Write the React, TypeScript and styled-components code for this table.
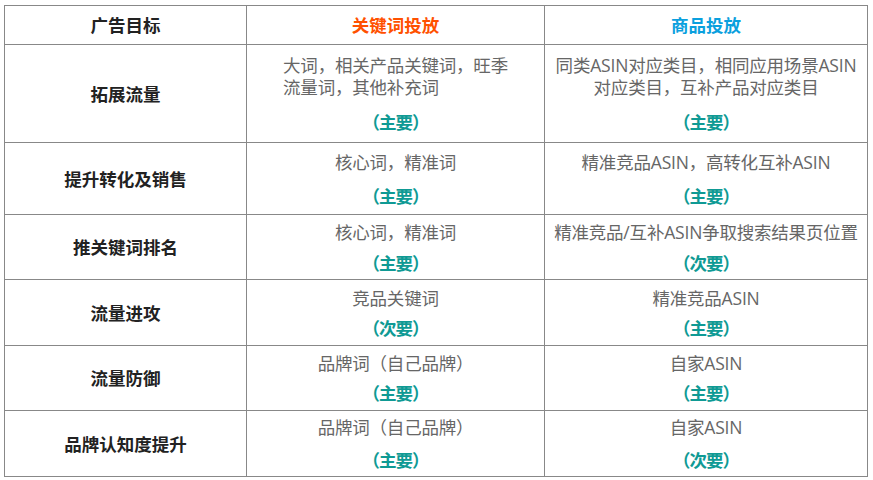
import React from 'react';
import styled, { createGlobalStyle } from 'styled-components';

const GlobalStyle = createGlobalStyle`
	html, body {
		margin: 0;
		padding: 0;
		background: #fff;
	}
	body {
		font-family: "Open Sans", "Noto Sans CJK SC", sans-serif;
	}
`

type Tag = '主要' | '次要'

type Row = {
	goal: string
	height: number
	gap: number
	keyword: string[]
	keywordTag: Tag
	keywordLeft?: boolean
	product: string[]
	productTag: Tag
}

const rows: Row[] = [
	{
		goal: '拓展流量',
		height: 98,
		gap: 13,
		keyword: ['大词，相关产品关键词，旺季', '流量词，其他补充词'],
		keywordTag: '主要',
		keywordLeft: true,
		product: ['同类ASIN对应类目，相同应用场景ASIN', '对应类目，互补产品对应类目'],
		productTag: '主要',
	},
	{
		goal: '提升转化及销售',
		height: 72,
		gap: 12,
		keyword: ['核心词，精准词'],
		keywordTag: '主要',
		product: ['精准竞品ASIN，高转化互补ASIN'],
		productTag: '主要',
	},
	{
		goal: '推关键词排名',
		height: 65,
		gap: 9,
		keyword: ['核心词，精准词'],
		keywordTag: '主要',
		product: ['精准竞品/互补ASIN争取搜索结果页位置'],
		productTag: '次要',
	},
	{
		goal: '流量进攻',
		height: 66,
		gap: 8,
		keyword: ['竞品关键词'],
		keywordTag: '次要',
		product: ['精准竞品ASIN'],
		productTag: '主要',
	},
	{
		goal: '流量防御',
		height: 65,
		gap: 8,
		keyword: ['品牌词（自己品牌）'],
		keywordTag: '主要',
		product: ['自家ASIN'],
		productTag: '主要',
	},
	{
		goal: '品牌认知度提升',
		height: 66,
		gap: 11,
		keyword: ['品牌词（自己品牌）'],
		keywordTag: '主要',
		product: ['自家ASIN'],
		productTag: '次要',
	},
]

const Lines = ({ lines }: { lines: string[] }) => (
	<>
		{lines.map((l, i) => (
			<React.Fragment key={i}>
				{i > 0 && <br />}
				{l}
			</React.Fragment>
		))}
	</>
)

export default function App() {
	return (
		<>
			<GlobalStyle />
			<Page>
				<Table>
					<colgroup>
						<col style={{ width: 242 }} />
						<col style={{ width: 298 }} />
						<col style={{ width: 323 }} />
					</colgroup>
					<thead>
						<TRow $height={39}>
							<HeadCell>广告目标</HeadCell>
							<HeadCell $color="#ff5100">关键词投放</HeadCell>
							<HeadCell $color="#0aa0de">商品投放</HeadCell>
						</TRow>
					</thead>
					<tbody>
						{rows.map((r) => (
							<TRow key={r.goal} $height={r.height}>
								<GoalCell>{r.goal}</GoalCell>
								<Cell>
									<CellBody $gap={r.gap}>
										<Desc $left={r.keywordLeft}>
											<Lines lines={r.keyword} />
										</Desc>
										<Level>（{r.keywordTag}）</Level>
									</CellBody>
								</Cell>
								<Cell>
									<CellBody $gap={r.gap}>
										<Desc>
											<Lines lines={r.product} />
										</Desc>
										<Level>（{r.productTag}）</Level>
									</CellBody>
								</Cell>
							</TRow>
						))}
					</tbody>
				</Table>
			</Page>
		</>
	)
}

const Page = styled.div`
	padding: 5px 0 0 4px;
`

const Table = styled.table`
	width: 864px;
	border-collapse: collapse;
	table-layout: fixed;
	font-size: 17.5px;
`

const TRow = styled.tr<{ $height: number }>`
	height: ${(p) => p.$height}px;
`

const HeadCell = styled.th<{ $color?: string }>`
	border: 1px solid #888;
	padding: 0 4px;
	text-align: center;
	vertical-align: middle;
	font-weight: 700;
	line-height: 22px;
	color: ${(p) => p.$color || '#222'};
`

const GoalCell = styled.td`
	border: 1px solid #888;
	padding: 0 4px;
	text-align: center;
	vertical-align: middle;
	font-weight: 700;
	color: #222;
	line-height: 22px;
`

const Cell = styled.td`
	border: 1px solid #888;
	padding: 0 2px;
	vertical-align: middle;
`

const CellBody = styled.div<{ $gap: number }>`
	display: flex;
	flex-direction: column;
	align-items: center;
	gap: ${(p) => p.$gap}px;
`

const Desc = styled.div<{ $left?: boolean }>`
	color: #666;
	line-height: 22px;
	white-space: nowrap;
	text-align: ${(p) => (p.$left ? 'left' : 'center')};
	letter-spacing: -0.2px;
`

const Level = styled.div`
	color: #0f9a94;
	font-weight: 700;
	line-height: 22px;
	letter-spacing: -1px;
`
